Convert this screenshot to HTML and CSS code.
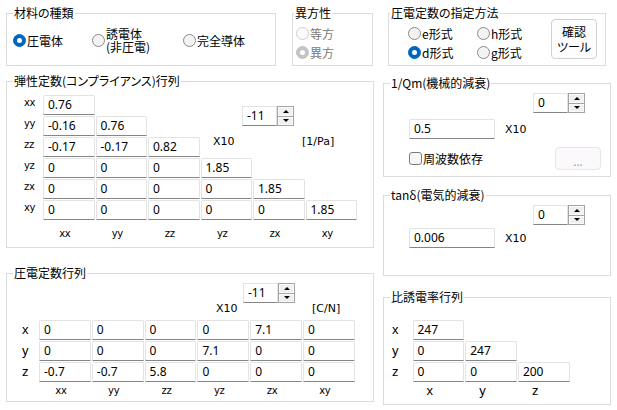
FILE: index.html
```html
<!DOCTYPE html>
<html lang="ja">
<head>
<meta charset="utf-8">
<title>材料定数</title>
<link rel="stylesheet" href="styles.css">
</head>
<body>
<div class="top-row">
  <div class="group g-material">
    <span class="gtitle">材料の種類</span>
    <div class="radio-row">
      <span class="radio r-piezo"><span class="rb checked"></span><span class="rtext">圧電体</span></span>
      <span class="radio r-diel"><span class="rb"></span><span class="rtext two">誘電体<br>(非圧電)</span></span>
      <span class="radio"><span class="rb"></span><span class="rtext">完全導体</span></span>
    </div>
  </div>
  <div class="group g-aniso">
    <span class="gtitle near">異方性</span>
    <div class="radio-col">
      <span class="radio disabled"><span class="rb"></span><span class="rtext">等方</span></span>
      <span class="radio disabled"><span class="rb checked"></span><span class="rtext">異方</span></span>
    </div>
  </div>
  <div class="group g-spec">
    <span class="gtitle near">圧電定数の指定方法</span>
    <div class="spec-body">
      <div class="spec-radios">
        <span class="radio"><span class="rb"></span><span class="rtext">e形式</span></span>
        <span class="radio"><span class="rb"></span><span class="rtext">h形式</span></span>
        <span class="radio"><span class="rb checked"></span><span class="rtext">d形式</span></span>
        <span class="radio"><span class="rb"></span><span class="rtext">g形式</span></span>
      </div>
      <div class="btn-confirm"><span>確認</span><span>ツール</span></div>
    </div>
  </div>
</div>

<div class="main">
  <div class="col-left">
    <div class="group g-elastic">
      <span class="gtitle">弾性定数(コンプライアンス)行列</span>
      <div class="elastic-grid">
        <div class="elastic-head">
          <span class="unit x10e">X10</span>
          <div class="spin"><span class="spin-val">-11</span><span class="spin-btns"><span class="sb up"></span><span class="sb down"></span></span></div>
          <span class="unit pa">[1/Pa]</span>
        </div>
        <span class="rl-s">xx</span><span class="tb">0.76</span>
        <span class="rl-s">yy</span><span class="tb">-0.16</span><span class="tb">0.76</span>
        <span class="rl-s">zz</span><span class="tb">-0.17</span><span class="tb">-0.17</span><span class="tb">0.82</span>
        <span class="rl-s">yz</span><span class="tb">0</span><span class="tb">0</span><span class="tb">0</span><span class="tb">1.85</span>
        <span class="rl-s">zx</span><span class="tb">0</span><span class="tb">0</span><span class="tb">0</span><span class="tb">0</span><span class="tb">1.85</span>
        <span class="rl-s">xy</span><span class="tb">0</span><span class="tb">0</span><span class="tb">0</span><span class="tb">0</span><span class="tb">0</span><span class="tb">1.85</span>
        <span class="cl-s first">xx</span><span class="cl-s">yy</span><span class="cl-s">zz</span><span class="cl-s">yz</span><span class="cl-s">zx</span><span class="cl-s">xy</span>
      </div>
    </div>

    <div class="group g-piezo">
      <span class="gtitle">圧電定数行列</span>
      <div class="piezo-body">
        <div class="piezo-head">
          <span class="unit x10p">X10</span>
          <div class="spin"><span class="spin-val">-11</span><span class="spin-btns"><span class="sb up"></span><span class="sb down"></span></span></div>
          <span class="unit cn">[C/N]</span>
        </div>
        <div class="piezo-grid">
          <span class="rl-l">x</span><span class="tb">0</span><span class="tb">0</span><span class="tb">0</span><span class="tb">0</span><span class="tb">7.1</span><span class="tb">0</span>
          <span class="rl-l">y</span><span class="tb">0</span><span class="tb">0</span><span class="tb">0</span><span class="tb">7.1</span><span class="tb">0</span><span class="tb">0</span>
          <span class="rl-l">z</span><span class="tb">-0.7</span><span class="tb">-0.7</span><span class="tb">5.8</span><span class="tb">0</span><span class="tb">0</span><span class="tb">0</span>
          <span class="cl-s first">xx</span><span class="cl-s">yy</span><span class="cl-s">zz</span><span class="cl-s">yz</span><span class="cl-s">zx</span><span class="cl-s">xy</span>
        </div>
      </div>
    </div>
  </div>

  <div class="col-right">
    <div class="group g-qm">
      <span class="gtitle">1/Qm(機械的減衰)</span>
      <div class="damp-body">
        <div class="spin damp-spin"><span class="spin-val">0</span><span class="spin-btns"><span class="sb up"></span><span class="sb down"></span></span></div>
        <div class="damp-row qm-row">
          <span class="tb wide">0.5</span>
          <span class="unit">X10</span>
        </div>
        <div class="check-row">
          <span class="cb"></span><span class="cb-text">周波数依存</span>
          <span class="btn-dots">...</span>
        </div>
      </div>
    </div>

    <div class="group g-tan">
      <span class="gtitle">tanδ(電気的減衰)</span>
      <div class="damp-body">
        <div class="spin damp-spin"><span class="spin-val">0</span><span class="spin-btns"><span class="sb up"></span><span class="sb down"></span></span></div>
        <div class="damp-row tan-row">
          <span class="tb wide">0.006</span>
          <span class="unit">X10</span>
        </div>
      </div>
    </div>

    <div class="group g-perm">
      <span class="gtitle">比誘電率行列</span>
      <div class="perm-grid">
        <span class="rl-l">x</span><span class="tb">247</span>
        <span class="rl-l">y</span><span class="tb">0</span><span class="tb">247</span>
        <span class="rl-l">z</span><span class="tb">0</span><span class="tb">0</span><span class="tb">200</span>
        <span class="cl-l first">x</span><span class="cl-l">y</span><span class="cl-l">z</span>
      </div>
    </div>
  </div>
</div>
</body>
</html>
```

FILE: styles.css
```css
* { box-sizing: border-box; }
html, body { margin: 0; padding: 0; }
body {
  width: 617px;
  height: 410px;
  overflow: hidden;
  background: #ffffff;
  color: #000;
  font-family: "Noto Sans CJK JP", sans-serif;
  font-size: 12px;
  font-feature-settings: "palt";
}

/* ---------- layout ---------- */
.top-row { display: flex; margin-top: 13px; padding-left: 6px; }
.main { display: flex; padding-left: 6px; }
.col-left { width: 368px; display: flex; flex-direction: column; }
.col-right { width: 228px; margin-left: 9px; display: flex; flex-direction: column; }

/* ---------- group boxes ---------- */
.group { position: relative; border: 1px solid #dcdcdc; }
.gtitle {
  position: absolute;
  top: -8px;
  left: 6px;
  padding: 0 1px;
  background: #fff;
  line-height: 14px;
  white-space: nowrap;
}
.gtitle.near { left: 1px; }

.g-material { width: 270px; height: 53px; }
.g-aniso { width: 81px; height: 53px; margin-left: 16px; }
.g-spec { width: 218px; height: 53px; margin-left: 15px; }
.g-elastic { height: 167px; margin-top: 15px; }
.g-piezo { height: 129px; margin-top: 25px; }
.g-qm { height: 94px; margin-top: 17px; }
.g-tan { height: 81px; margin-top: 18px; }
.g-perm { height: 108px; margin-top: 21px; }

/* ---------- radio buttons ---------- */
.radio { display: flex; align-items: center; }
.rb {
  flex: none;
  width: 13px;
  height: 13px;
  margin-right: 1px;
  border-radius: 50%;
  border: 1px solid #8a8a8a;
  background: #f3f3f3;
  display: flex;
  align-items: center;
  justify-content: center;
}
.rb.checked { background: #0067c0; border-color: #0067c0; }
.rb.checked::after {
  content: "";
  width: 5px;
  height: 5px;
  border-radius: 50%;
  background: #fff;
}
.rtext { line-height: 14px; white-space: nowrap; }
.rtext.two { line-height: 12.5px; }
.radio.disabled .rtext { color: #7a7a7a; }
.radio.disabled .rb { border-color: #cdcdcd; background: #fbfbfb; }
.radio.disabled .rb.checked { border-color: #c4c4c4; background: #c4c4c4; }

.radio-row { display: flex; align-items: center; padding: 14px 0 0 6px; }
.r-piezo { width: 79px; }
.r-diel { width: 91px; }

.radio-col { display: flex; flex-direction: column; padding: 10px 0 0 3px; }
.radio-col .radio { height: 19px; }

.spec-body { display: flex; padding-left: 19px; }
.spec-radios {
  display: grid;
  grid-template-columns: 69px 69px;
  grid-auto-rows: 19px;
  margin-top: 10px;
}
.btn-confirm {
  width: 46px;
  height: 40px;
  margin: 5px 0 0 5px;
  border: 1px solid #d0d0d0;
  border-radius: 4px;
  background: #fdfdfd;
  display: flex;
  flex-direction: column;
  align-items: center;
  justify-content: center;
  line-height: 15px;
}

/* ---------- text boxes ---------- */
.tb {
  height: 20px;
  border: 1px solid #e3e3e3;
  border-bottom-color: #868686;
  border-radius: 2px 2px 0 0;
  background: #fff;
  padding-left: 4px;
  font-family: "Noto Sans", sans-serif;
  font-size: 12px;
  line-height: 18px;
  white-space: nowrap;
  overflow: hidden;
}
.tb.wide { width: 86px; }

/* ---------- spinner ---------- */
.spin { display: flex; height: 20px; flex: none; }
.spin-val {
  width: 35px;
  height: 20px;
  border: 1px solid #e3e3e3;
  border-bottom-color: #868686;
  background: #fff;
  padding-left: 4px;
  font-family: "Noto Sans", sans-serif;
  font-size: 12px;
  line-height: 18px;
}
.spin-btns {
  width: 17px;
  height: 20px;
  border: 1px solid #a4a4a4;
  display: flex;
  flex-direction: column;
  background: #a4a4a4;
  gap: 1px;
}
.sb {
  flex: 1;
  background: #efefef;
  border: 1px solid #fafafa;
  display: flex;
  align-items: center;
  justify-content: center;
}
.sb.up::after {
  content: "";
  border-left: 3px solid transparent;
  border-right: 3px solid transparent;
  border-bottom: 3px solid #000;
}
.sb.down::after {
  content: "";
  border-left: 3px solid transparent;
  border-right: 3px solid transparent;
  border-top: 3px solid #000;
}

/* ---------- unit labels ---------- */
.unit {
  font-family: "DejaVu Sans", sans-serif;
  font-size: 11px;
  line-height: 13px;
  white-space: nowrap;
}

/* ---------- elastic matrix ---------- */
.elastic-grid {
  display: grid;
  grid-template-columns: 18px repeat(6, 51.5px);
  grid-template-rows: repeat(6, 20px);
  grid-auto-rows: auto;
  gap: 1px;
  padding: 13px 0 0 17px;
}
.elastic-head {
  grid-row: 1 / 4;
  grid-column: 5 / 8;
  display: flex;
  align-items: flex-start;
}
.x10e { width: 29px; margin: 40px 0 0 12.5px; }
.elastic-head .spin { margin-top: 11px; }
.pa { margin: 40px 0 0 8px; }

.rl-s {
  grid-column: 1;
  font-family: "DejaVu Sans", sans-serif;
  font-size: 10px;
  letter-spacing: -0.3px;
  line-height: 15px;
}
.cl-s {
  font-family: "DejaVu Sans", sans-serif;
  font-size: 10px;
  letter-spacing: -0.3px;
  line-height: 15px;
  text-align: center;
  padding-right: 8px;
}
.cl-s.first { grid-column: 2; }
.elastic-grid .cl-s { margin-top: 5px; }

/* ---------- piezo matrix ---------- */
.piezo-body { padding: 9px 0 0 15px; }
.piezo-head { display: flex; align-items: flex-start; height: 37px; }
.x10p { width: 27px; margin: 19px 0 0 194px; }
.cn { margin: 19px 0 0 17px; }
.piezo-grid {
  display: grid;
  grid-template-columns: 16px repeat(6, 51.8px);
  grid-template-rows: repeat(3, 20px);
  grid-auto-rows: auto;
  gap: 1px;
}
.rl-l {
  grid-column: 1;
  font-family: "Liberation Sans", sans-serif;
  font-size: 13px;
  line-height: 20px;
}
.cl-l {
  font-family: "Liberation Sans", sans-serif;
  font-size: 13px;
  line-height: 15px;
  padding-left: 14px;
}
.cl-l.first { grid-column: 2; }

/* ---------- damping groups ---------- */
.damp-body { padding-top: 9px; }
.damp-spin { margin-left: 149px; }
.damp-row { display: flex; align-items: center; padding-left: 25px; }
.qm-row { margin-top: 6px; }
.tan-row { margin-top: 3px; }
.damp-row .unit { margin-left: 10px; }
.check-row { display: flex; align-items: center; margin-top: 8px; padding-left: 25px; }
.cb {
  width: 13px;
  height: 13px;
  border: 1px solid #7a7a7a;
  border-radius: 3px;
  background: #f7f7f7;
  flex: none;
}
.cb-text { margin-left: 1px; line-height: 14px; }
.btn-dots {
  width: 46px;
  height: 23px;
  margin-left: auto;
  margin-right: 9px;
  border: 1px solid #e6e6e6;
  border-radius: 4px;
  background: #fbf9fb;
  color: #a0a0a0;
  font-family: "Noto Sans", sans-serif;
  font-size: 12px;
  line-height: 23px;
  text-align: center;
  padding-top: 2px;
}

/* ---------- permittivity ---------- */
.perm-grid {
  display: grid;
  grid-template-columns: 19.5px repeat(3, 51.7px);
  grid-template-rows: repeat(3, 20px);
  grid-auto-rows: auto;
  gap: 1px;
  padding: 22px 0 0 8px;
}
```
